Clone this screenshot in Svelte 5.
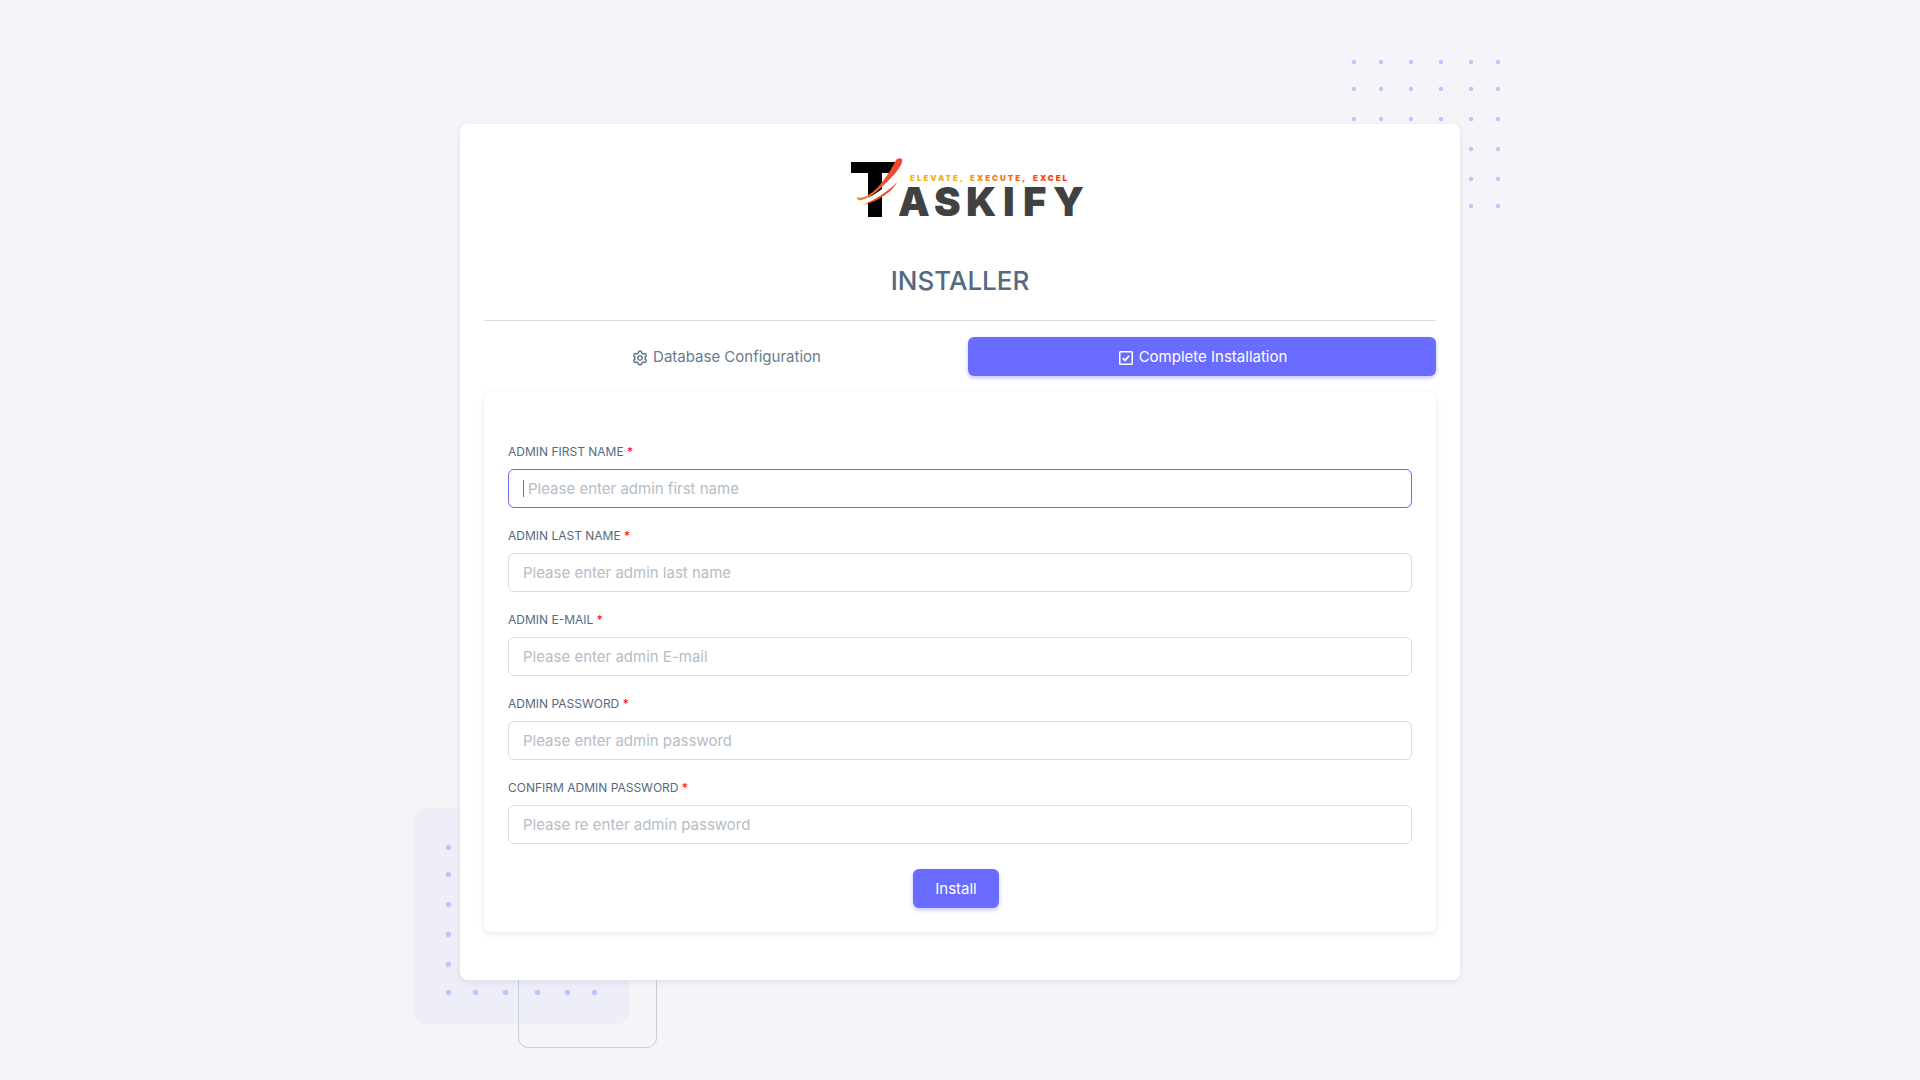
<script>
  const fields = [
    { id: 'first-name', label: 'Admin first name', placeholder: 'Please enter admin first name', type: 'text', active: true },
    { id: 'last-name', label: 'Admin last name', placeholder: 'Please enter admin last name', type: 'text' },
    { id: 'email', label: 'Admin E-mail', placeholder: 'Please enter admin E-mail', type: 'email' },
    { id: 'password', label: 'Admin password', placeholder: 'Please enter admin password', type: 'password' },
    { id: 'confirm', label: 'Confirm admin password', placeholder: 'Please re enter admin password', type: 'password' }
  ];
  const topCols = [2, 29, 59, 89, 119, 146];
  const topRows = [2, 29, 59, 89, 119, 146];
  const lowCols = [35, 62, 92, 124, 154, 181];
  const lowRows = [40, 67, 97, 127, 157, 185];
</script>

<main class="page">
  <div class="shell">
    <svg class="dots" width="148" height="148" aria-hidden="true">
      {#each topRows as y}
        {#each topCols as x}
          <circle cx={x} cy={y} r="2.2" />
        {/each}
      {/each}
    </svg>
    <svg class="block" width="215" height="216" aria-hidden="true">
      <rect width="215" height="216" rx="12" />
      {#each lowRows as y}
        {#each lowCols as x}
          <circle cx={x - 0.5} cy={y - 0.5} r="2.7" />
        {/each}
      {/each}
    </svg>
    <div class="outline"></div>

    <section class="card">
      <a class="brand" href="#home" aria-label="Taskify">
        <svg width="240" height="76" viewBox="0 0 240 76">
          <defs>
            <linearGradient id="tag" gradientUnits="userSpaceOnUse" x1="60" y1="0" x2="220" y2="0">
              <stop offset="0" stop-color="#ecb31e" />
              <stop offset="0.3" stop-color="#f0b010" />
              <stop offset="0.42" stop-color="#f98a10" />
              <stop offset="0.75" stop-color="#fb4f08" />
              <stop offset="1" stop-color="#f43a0c" />
            </linearGradient>
            <linearGradient id="swoosh" gradientUnits="userSpaceOnUse" x1="8" y1="0" x2="44" y2="0">
              <stop offset="0" stop-color="#f58a1f" />
              <stop offset="0.6" stop-color="#f0562c" />
              <stop offset="1" stop-color="#ee4a32" />
            </linearGradient>
          </defs>
          <path d="M1 6H47L44 17H32V61H18V17H1Z" fill="#000" />
          <path d="M8 44C22 44 42 27 49 12L47 27C40 36 28 43 12 49Z" fill="#fff" />
          <path d="M7 41C11 43 17 40 20 38C29 32 39 18 45 6C46 3 49 1 52 3C54 7 46 17 40 23C32 31 22 41 12 44C8 45 7 43 7 41Z" fill="url(#swoosh)" />
          <path d="M12 49C24 44 38 36 47 26C43 35 28 46 12 49Z" fill="url(#swoosh)" />
          <text class="tagline" y="25" fill="url(#tag)"><tspan x="60">ELEVATE,</tspan><tspan x="120">EXECUTE,</tspan><tspan x="183">EXCEL</tspan></text>
          <text class="wordmark" x="48 84 116 153 173 203" y="60">ASKIFY</text>
        </svg>
      </a>

      <h1>INSTALLER</h1>
      <hr />

      <nav class="tabs">
        <button class="tab" type="button">
          <svg width="18" height="18" viewBox="0 0 24 24" fill="currentColor" aria-hidden="true">
            <path d="M12 16c2.206 0 4-1.794 4-4s-1.794-4-4-4-4 1.794-4 4 1.794 4 4 4zm0-6c1.084 0 2 .916 2 2s-.916 2-2 2-2-.916-2-2 .916-2 2-2z" />
            <path d="m2.845 16.136 1 1.73c.531.917 1.809 1.261 2.73.73l.529-.306A8.1 8.1 0 0 0 9 19.402V20c0 1.103.897 2 2 2h2c1.103 0 2-.897 2-2v-.598a8.132 8.132 0 0 0 1.896-1.111l.529.306c.923.53 2.198.188 2.731-.731l.999-1.729a2.001 2.001 0 0 0-.731-2.732l-.505-.292a7.718 7.718 0 0 0 0-2.224l.505-.292a2.002 2.002 0 0 0 .731-2.732l-.999-1.729c-.531-.92-1.808-1.265-2.731-.732l-.529.306A8.1 8.1 0 0 0 15 4.598V4c0-1.103-.897-2-2-2h-2c-1.103 0-2 .897-2 2v.598a8.132 8.132 0 0 0-1.896 1.111l-.529-.306c-.924-.531-2.2-.187-2.731.732l-.999 1.729a2.001 2.001 0 0 0 .731 2.732l.505.292a7.683 7.683 0 0 0 0 2.223l-.505.292a2.003 2.003 0 0 0-.731 2.733zm3.326-2.758A5.703 5.703 0 0 1 6 12c0-.462.058-.926.17-1.378a.999.999 0 0 0-.47-1.108l-1.123-.65.998-1.729 1.145.662a.997.997 0 0 0 1.188-.142 6.071 6.071 0 0 1 2.384-1.399A1 1 0 0 0 11 5.3V4h2v1.3a1 1 0 0 0 .708.956 6.083 6.083 0 0 1 2.384 1.399.999.999 0 0 0 1.188.142l1.144-.661 1 1.729-1.124.649a1 1 0 0 0-.47 1.108c.112.452.17.916.17 1.378 0 .461-.058.925-.171 1.378a1 1 0 0 0 .471 1.108l1.123.649-.998 1.729-1.145-.661a.996.996 0 0 0-1.188.142 6.071 6.071 0 0 1-2.384 1.399A1 1 0 0 0 13 18.7l.002 1.3H11v-1.3a1 1 0 0 0-.708-.956 6.083 6.083 0 0 1-2.384-1.399.992.992 0 0 0-1.188-.141l-1.144.662-1-1.729 1.124-.651a1 1 0 0 0 .471-1.108z" />
          </svg>
          <span>Database Configuration</span>
        </button>
        <button class="tab active" type="button">
          <svg width="18" height="18" viewBox="0 0 18 18" fill="none" stroke="currentColor" aria-hidden="true">
            <rect x="2.75" y="2.75" width="12.5" height="12.5" rx="0.75" stroke-width="1.5" />
            <path d="M5.8 9.2L8 11.4L12.2 6.8" stroke-width="1.7" />
          </svg>
          <span>Complete Installation</span>
        </button>
      </nav>

      <form class="panel" novalidate>
        {#each fields as f}
          <div class="field">
            <label for={f.id}>{f.label} <span class="star">*</span></label>
            <div class="control">
              <input id={f.id} type={f.type} placeholder={f.placeholder} class:active={f.active} />
              {#if f.active}<i class="caret"></i>{/if}
            </div>
          </div>
        {/each}
        <div class="actions">
          <button class="install" type="button">Install</button>
        </div>
      </form>
    </section>
  </div>
</main>

<style>
  :global(body) {
    background: #f5f5f9;
  }
  .page {
    box-sizing: border-box;
    min-height: 100vh;
    padding: 48px 24px 24px;
    display: flex;
    align-items: center;
    justify-content: center;
    font-family: Inter, 'Liberation Sans', sans-serif;
    font-size: 15px;
    color: #697a8d;
  }
  .shell {
    position: relative;
    width: 100%;
    max-width: 1000px;
  }
  .dots {
    position: absolute;
    top: -64px;
    right: -40px;
    fill: #c3c4ff;
  }
  .block {
    position: absolute;
    left: -46px;
    bottom: -44px;
    fill: #c3c4ff;
  }
  .block rect {
    fill: #eeeef9;
  }
  .outline {
    position: absolute;
    left: 58px;
    bottom: -68px;
    width: 137px;
    height: 137px;
    border: 1px solid #c8cdd6;
    border-radius: 10px;
  }
  .card {
    position: relative;
    box-sizing: border-box;
    padding: 32px 24px 48px;
    background: #fff;
    border-radius: 8px;
    box-shadow: 0 2px 6px rgba(67, 89, 113, 0.12);
  }
  .brand {
    display: flex;
    justify-content: center;
    padding-left: 20px;
  }
  .brand svg {
    display: block;
  }
  .tagline {
    font: 900 8px Inter, sans-serif;
    letter-spacing: 2px;
  }
  .wordmark {
    font: 900 40px Inter, sans-serif;
    fill: #414141;
  }
  h1 {
    margin: 33px 0 23px;
    font-size: 26px;
    line-height: 32px;
    font-weight: 500;
    text-align: center;
    color: #566a7f;
  }
  hr {
    margin: 0 0 16px;
    border: 0;
    border-top: 1px solid #d9dee3;
  }
  .tabs {
    display: grid;
    grid-template-columns: 121fr 117fr;
    margin-bottom: 16px;
  }
  button {
    font: inherit;
    border: 0;
    border-radius: 6px;
    background: none;
    color: inherit;
    cursor: pointer;
  }
  .tab {
    display: flex;
    align-items: center;
    justify-content: center;
    gap: 4px;
    height: 39px;
    padding: 0 16px;
  }
  .tab svg {
    margin-top: 2px;
  }
  .tab.active,
  .install {
    background: #696cff;
    color: #fff;
    box-shadow: 0 2px 4px rgba(105, 108, 255, 0.4);
  }
  .panel {
    padding: 50px 24px 24px;
    border-radius: 6px;
    box-shadow: 0 2px 6px rgba(67, 89, 113, 0.12);
  }
  .field {
    margin-bottom: 18px;
  }
  label {
    display: block;
    margin-bottom: 7px;
    font-size: 12px;
    line-height: 20px;
    text-transform: uppercase;
    color: #566a7f;
  }
  .star {
    color: #f00;
  }
  .control {
    position: relative;
  }
  input {
    display: block;
    box-sizing: border-box;
    width: 100%;
    height: 39px;
    padding: 0 14px;
    border: 1px solid #d9dee3;
    border-radius: 6px;
    background: #fff;
    font: inherit;
    color: #697a8d;
    outline: 0;
  }
  input::placeholder {
    color: #b4bdc6;
    opacity: 1;
  }
  input.active {
    padding-left: 19px;
    border-color: #696cff;
  }
  .caret {
    position: absolute;
    left: 15px;
    top: 11px;
    width: 1px;
    height: 17px;
    background: #697a8d;
  }
  .actions {
    display: flex;
    justify-content: center;
    padding: 7px 8px 0 0;
  }
  .install {
    height: 39px;
    padding: 0 22px;
  }
</style>
